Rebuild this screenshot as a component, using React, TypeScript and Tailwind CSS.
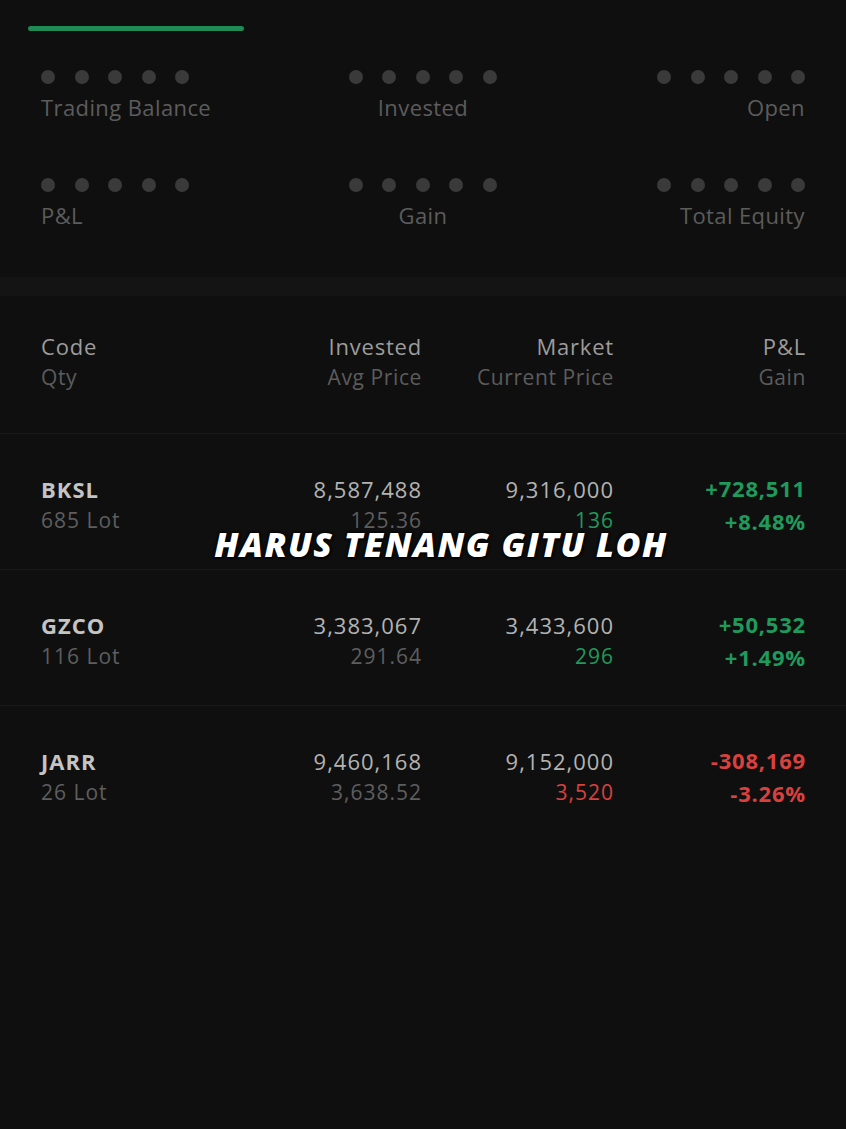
import React from "react";

type Row = {
  code: string;
  qty: string;
  invested: string;
  avg: string;
  market: string;
  current: string;
  pl: string;
  gain: string;
  up: boolean;
};

const rows: Row[] = [
  { code: "BKSL", qty: "685 Lot", invested: "8,587,488", avg: "125.36", market: "9,316,000", current: "136", pl: "+728,511", gain: "+8.48%", up: true },
  { code: "GZCO", qty: "116 Lot", invested: "3,383,067", avg: "291.64", market: "3,433,600", current: "296", pl: "+50,532", gain: "+1.49%", up: true },
  { code: "JARR", qty: "26 Lot", invested: "9,460,168", avg: "3,638.52", market: "9,152,000", current: "3,520", pl: "-308,169", gain: "-3.26%", up: false },
];

function Dots() {
  return (
    <div className="flex gap-[19.5px]">
      {[0, 1, 2, 3, 4].map((i) => (
        <span key={i} className="w-[14px] h-[14px] rounded-full bg-[#3a3a3a]" />
      ))}
    </div>
  );
}

function Stat({ label, align }: { label: string; align: "start" | "center" | "end" }) {
  const cls =
    align === "start" ? "items-start" : align === "center" ? "items-center" : "items-end";
  return (
    <div className={`flex flex-col ${cls}`}>
      <Dots />
      <p className="mt-[9px] text-[22px] leading-[28px] tracking-[0.4px] text-[#5c5c5c]">{label}</p>
    </div>
  );
}

export default function App() {
  return (
    <div
      className="relative min-h-[1129px] w-full bg-[#0f0f0f]"
      style={{ fontFamily: "'Open Sans', 'Noto Sans', sans-serif" }}
    >
      {/* Summary */}
      <div className="h-[277px] pt-[26px]">
        <div className="ml-[28px] w-[216px] h-[5px] rounded-sm bg-[#1f8a56]" />
        <div className="mt-[39px] px-[41px] grid grid-cols-3 gap-y-[57px]">
          <Stat label="Trading Balance" align="start" />
          <Stat label="Invested" align="center" />
          <Stat label="Open" align="end" />
          <Stat label="P&L" align="start" />
          <Stat label="Gain" align="center" />
          <Stat label="Total Equity" align="end" />
        </div>
      </div>

      <div className="h-[19px] bg-[#141414]" />

      {/* Table header */}
      <div className="h-[137px] pt-[36px] pl-[41px] pr-[40px] flex">
        <div className="flex-1">
          <p className="text-[22px] leading-[28px] tracking-[0.8px] text-[#9c9c9c]">Code</p>
          <p className="text-[21px] leading-[34px] tracking-[0.6px] text-[#5c5c5c]">Qty</p>
        </div>
        <div className="w-[200px] text-right">
          <p className="text-[22px] leading-[28px] tracking-[0.8px] text-[#9c9c9c]">Invested</p>
          <p className="text-[21px] leading-[34px] tracking-[0.6px] text-[#5c5c5c]">Avg Price</p>
        </div>
        <div className="w-[192px] text-right">
          <p className="text-[22px] leading-[28px] tracking-[0.8px] text-[#9c9c9c]">Market</p>
          <p className="text-[21px] leading-[34px] tracking-[0.6px] text-[#5c5c5c]">Current Price</p>
        </div>
        <div className="w-[192px] text-right">
          <p className="text-[22px] leading-[28px] tracking-[0.8px] text-[#9c9c9c]">P&L</p>
          <p className="text-[21px] leading-[34px] tracking-[0.6px] text-[#5c5c5c]">Gain</p>
        </div>
      </div>

      {/* Positions */}
      {rows.map((r) => {
        const tone = r.up ? "text-[#1f9a5c]" : "text-[#d8413e]";
        return (
          <div key={r.code} className="h-[136px] border-t border-[#181818] pt-[41px] pl-[41px] pr-[40px] flex">
            <div className="flex-1">
              <p className="text-[22px] leading-[28px] tracking-[1px] font-bold text-[#c4c4c4]">{r.code}</p>
              <p className="text-[21px] leading-[34px] tracking-[1px] text-[#5e5e5e]">{r.qty}</p>
            </div>
            <div className="w-[200px] text-right">
              <p className="text-[22px] leading-[28px] tracking-[1px] text-[#b3b3b3]">{r.invested}</p>
              <p className="text-[21px] leading-[34px] tracking-[1px] text-[#5e5e5e]">{r.avg}</p>
            </div>
            <div className="w-[192px] text-right">
              <p className="text-[22px] leading-[28px] tracking-[1px] text-[#b3b3b3]">{r.market}</p>
              <p className={`text-[21px] leading-[34px] tracking-[1px] ${tone}`}>{r.current}</p>
            </div>
            <div className="w-[192px] text-right">
              <p className={`text-[22px] leading-[26px] tracking-[0.8px] font-bold ${tone}`}>{r.pl}</p>
              <p className={`mt-[7px] text-[22px] leading-[26px] tracking-[0.8px] font-bold ${tone}`}>{r.gain}</p>
            </div>
          </div>
        );
      })}

      {/* Caption overlay */}
      <div className="absolute left-0 right-0 top-[524px] flex justify-center pl-[36px]">
        <p
          className="text-[34px] leading-[40px] tracking-[1.5px] font-extrabold italic text-white"
          style={{ textShadow: "0 0 3px #000, 0 0 3px #000, 1px 1px 2px #000" }}
        >
          HARUS TENANG GITU LOH
        </p>
      </div>
    </div>
  );
}
